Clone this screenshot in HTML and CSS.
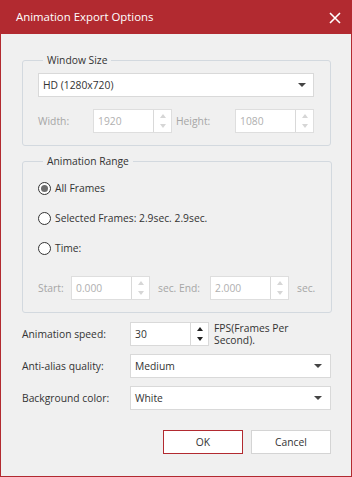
FILE: index.html
```html
<!DOCTYPE html>
<html lang="en">

<head>
    <meta charset="UTF-8">
    <meta name="viewport" content="width=device-width, initial-scale=1.0">
    <title>Animation Export Options</title>
    <link rel="stylesheet" href="styles.css">
</head>

<body>
    <div class="window">
        <header class="titlebar">
            <span class="title">Animation Export Options</span>
            <button class="close-btn" aria-label="Close">
                <svg width="12" height="12" viewBox="0 0 12 12">
                    <path d="M1 1 L11 11 M11 1 L1 11" stroke="#fff" stroke-width="1.6" fill="none"/>
                </svg>
            </button>
        </header>

        <main class="content">
            <fieldset class="group">
                <legend>Window Size</legend>
                <div class="select">
                    <span>HD (1280x720)</span>
                    <span class="caret"></span>
                </div>
                <div class="size-row disabled">
                    <span class="size-label">Width:</span>
                    <div class="spin small">
                        <span class="spin-value">1920</span>
                        <span class="spin-arrows"><i class="up"></i><i class="down"></i></span>
                    </div>
                    <span class="size-label height-label">Height:</span>
                    <div class="spin small">
                        <span class="spin-value">1080</span>
                        <span class="spin-arrows"><i class="up"></i><i class="down"></i></span>
                    </div>
                </div>
            </fieldset>

            <fieldset class="group range">
                <legend>Animation Range</legend>
                <label class="radio-row"><span class="radio checked"></span>All Frames</label>
                <label class="radio-row"><span class="radio"></span>Selected Frames: 2.9sec. 2.9sec.</label>
                <label class="radio-row"><span class="radio"></span>Time:</label>
                <div class="time-row disabled">
                    <span class="start-label">Start:</span>
                    <div class="spin small">
                        <span class="spin-value">0.000</span>
                        <span class="spin-arrows"><i class="up"></i><i class="down"></i></span>
                    </div>
                    <span class="end-label">sec. End:</span>
                    <div class="spin small">
                        <span class="spin-value">2.000</span>
                        <span class="spin-arrows"><i class="up"></i><i class="down"></i></span>
                    </div>
                    <span class="sec-label">sec.</span>
                </div>
            </fieldset>

            <div class="form-row first">
                <span class="form-label">Animation speed:</span>
                <div class="spin speed">
                    <span class="spin-value">30</span>
                    <span class="spin-arrows"><i class="up"></i><i class="down"></i></span>
                </div>
                <span class="fps">FPS(Frames Per<br>Second).</span>
            </div>
            <div class="form-row">
                <span class="form-label">Anti-alias quality:</span>
                <div class="select wide">
                    <span>Medium</span>
                    <span class="caret"></span>
                </div>
            </div>
            <div class="form-row">
                <span class="form-label">Background color:</span>
                <div class="select wide">
                    <span>White</span>
                    <span class="caret"></span>
                </div>
            </div>

            <div class="buttons">
                <button class="btn ok">OK</button>
                <button class="btn">Cancel</button>
            </div>
        </main>
    </div>
</body>

</html>
```

FILE: styles.css
```css
* {
    margin: 0;
    padding: 0;
    box-sizing: border-box;
}

body {
    font-family: "Open Sans", "Noto Sans", sans-serif;
    font-size: 10.3px;
    color: #333;
    background-color: #f0f0f0;
}

.window {
    width: 352px;
    height: 477px;
    border: 1px solid #b22a30;
    border-top: none;
    background-color: #f0f0f0;
}

.titlebar {
    height: 34px;
    margin: 0 -1px;
    background-color: #b22a30;
    color: white;
    display: flex;
    align-items: center;
    justify-content: space-between;
    padding: 0 11px 0 16px;
}

.title {
    font-size: 11.4px;
    padding-bottom: 1px;
}

.close-btn {
    background: none;
    border: none;
    width: 12px;
    height: 12px;
    display: flex;
    margin-top: 1px;
}

.content {
    padding: 0 20px 0 21px;
}

/* Group boxes */
.group {
    border: 1px solid #d3d9df;
    border-radius: 3px;
    padding: 5px 16px 12px 15px;
    margin-top: 18px;
}

.group legend {
    line-height: 16px;
    padding: 0 4px;
    margin-left: 5px;
    color: #333;
}

.range {
    margin-top: 7px;
    padding-top: 9px;
    padding-bottom: 12px;
}

/* Dropdowns */
.select {
    height: 24px;
    background-color: white;
    border: 1px solid #d9d9d9;
    display: flex;
    align-items: center;
    justify-content: space-between;
    padding: 0 7px 0 4px;
}

.select.wide {
    flex: 1;
    padding-right: 8px;
}

.caret {
    width: 0;
    height: 0;
    border-left: 4px solid transparent;
    border-right: 4px solid transparent;
    border-top: 4px solid #444;
}

/* Spin boxes */
.spin {
    height: 24px;
    background-color: white;
    border: 1px solid #d9d9d9;
    display: flex;
}

.spin-value {
    flex: 1;
    display: flex;
    align-items: center;
    padding-left: 4px;
}

.spin-arrows {
    width: 18px;
    border-left: 1px solid #d9d9d9;
    display: flex;
    flex-direction: column;
    align-items: center;
    justify-content: center;
    gap: 6px;
}

.spin-arrows i {
    width: 0;
    height: 0;
    border-left: 3.5px solid transparent;
    border-right: 3.5px solid transparent;
}

.spin-arrows .up {
    border-bottom: 4px solid #222;
}

.spin-arrows .down {
    border-top: 4px solid #222;
}

.small {
    width: 79px;
}

.disabled {
    color: #a6a6a6;
}

.disabled .spin {
    border-color: #dedede;
}

.disabled .spin-value {
    color: #b0b0b0;
}

.disabled .spin-arrows .up {
    border-bottom-color: #d6d6d6;
}

.disabled .spin-arrows .down {
    border-top-color: #d6d6d6;
}

.size-row {
    display: flex;
    align-items: center;
    margin-top: 12px;
}

.size-row .size-label {
    width: 55px;
}

.size-row .height-label {
    width: 63px;
    padding-left: 4px;
}

/* Radios */
.radio-row {
    display: flex;
    align-items: center;
    height: 20px;
    margin-bottom: 10px;
    gap: 4px;
}

.radio {
    width: 13px;
    height: 13px;
    border-radius: 50%;
    border: 1px solid #333;
    background-color: white;
    display: flex;
    align-items: center;
    justify-content: center;
}

.radio.checked::after {
    content: "";
    width: 7px;
    height: 7px;
    border-radius: 50%;
    background-color: #6e6e6e;
}

.time-row {
    display: flex;
    align-items: center;
    margin-top: 18px;
}

.start-label {
    width: 33px;
}

.end-label {
    width: 60px;
    padding-left: 8px;
}

.sec-label {
    padding-left: 8px;
}

/* Bottom form */
.form-row {
    display: flex;
    align-items: center;
    margin-top: 8px;
}

.form-row.first {
    margin-top: 9px;
}

.form-label {
    width: 108px;
}

.speed {
    width: 79px;
}

.fps {
    line-height: 12px;
    padding-left: 5px;
    margin-top: -1px;
}

.buttons {
    display: flex;
    justify-content: flex-end;
    gap: 8px;
    margin-top: 20px;
}

.btn {
    width: 80px;
    height: 24px;
    font-family: inherit;
    font-size: 10.3px;
    color: #333;
    background-color: white;
    border: 1px solid #d4d4d4;
}

.btn.ok {
    border-color: #b22a30;
}
```
